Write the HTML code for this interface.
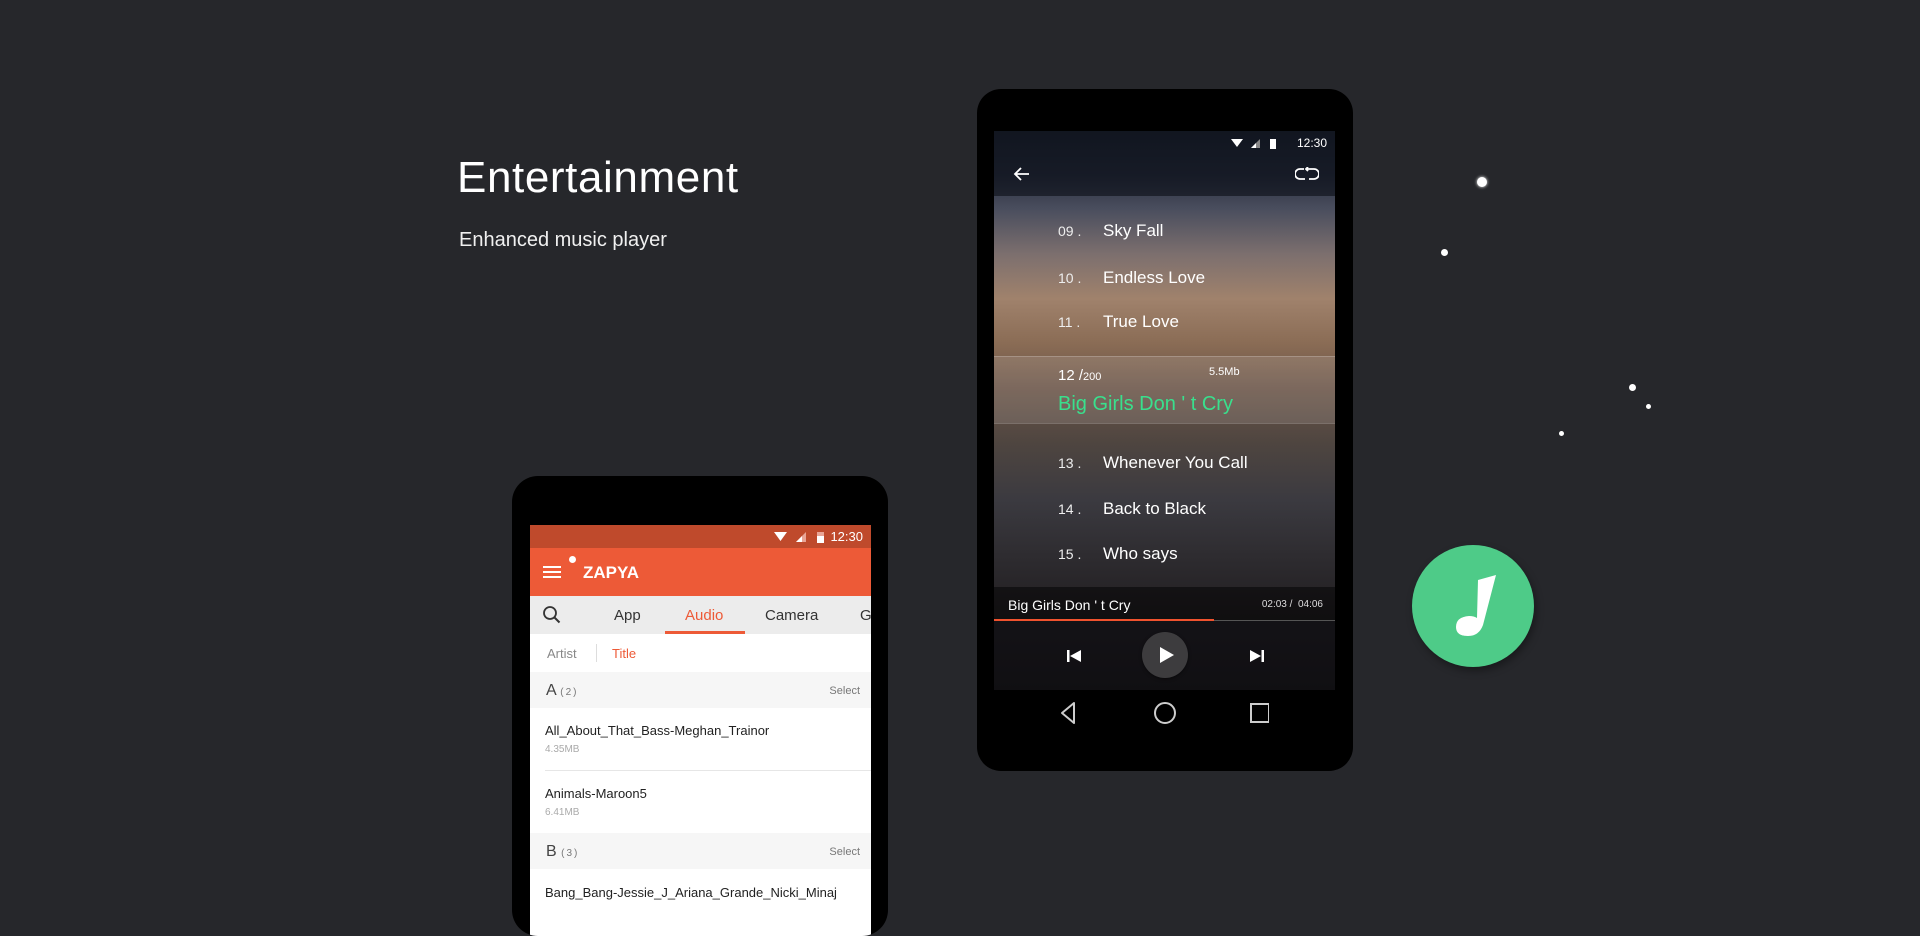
<!DOCTYPE html>
<html><head><meta charset="utf-8"><style>
*{margin:0;padding:0;box-sizing:border-box}
body{width:1920px;height:900px;background:#26272b;overflow:hidden;position:relative;font-family:"Liberation Sans",sans-serif}
.abs{position:absolute}
.t{position:absolute;white-space:nowrap}
</style></head><body>
<div class="t" style="left:457px;top:153px;font-size:44px;color:#fff;letter-spacing:0.6px">Entertainment</div>
<div class="t" style="left:459px;top:229px;font-size:20px;color:#f0f0f0">Enhanced music player</div>

<!-- stars -->
<div class="abs" style="left:1477px;top:177px;width:10px;height:10px;border-radius:50%;background:#fff;box-shadow:0 0 3px #fff"></div>
<div class="abs" style="left:1441px;top:249px;width:7px;height:7px;border-radius:50%;background:#fff"></div>
<div class="abs" style="left:1629px;top:384px;width:7px;height:7px;border-radius:50%;background:#fff"></div>
<div class="abs" style="left:1646px;top:404px;width:5px;height:5px;border-radius:50%;background:#fff"></div>
<div class="abs" style="left:1559px;top:431px;width:5px;height:5px;border-radius:50%;background:#fff"></div>

<!-- green circle -->
<div class="abs" style="left:1412px;top:545px;width:122px;height:122px;border-radius:50%;background:#4ecb88;box-shadow:2px 4px 8px rgba(0,0,0,.35)">
<svg width="122" height="122" viewBox="0 0 122 122"><path d="M66 35 L84 30 L71 80 Q67 91 56 91 Q44 91 44 82 Q44 72 57 71 Q62 71 65 73 Z" fill="#fff"/></svg>
</div>

<!-- left phone -->
<div class="abs" style="left:512px;top:476px;width:376px;height:460px;border-radius:26px;background:#000;overflow:hidden">
 <div class="abs" style="left:18px;top:49px;width:341px;height:420px;background:#fff;overflow:hidden">
  <div class="abs" style="left:0;top:0;width:341px;height:23px;background:#bf4a2c"></div>
  <div class="t" style="right:8px;top:4px;font-size:13px;color:#fff">12:30</div>
  <svg class="abs" style="left:244px;top:6px" width="60" height="13"><path d="M0 1 L13 1 L6.5 10Z" fill="#fff"/><path d="M22 11 L32 1 L32 11Z" fill="#e9a596"/><path d="M22 11 L28 5 L28 11Z" fill="#fff"/><rect x="43" y="1" width="7" height="11" fill="#fff"/><rect x="43" y="1" width="7" height="4" fill="#e9a596"/></svg>
  <div class="abs" style="left:0;top:23px;width:341px;height:48px;background:#ed5a37"></div>
  <div class="abs" style="left:13px;top:41px;width:18px;height:2px;background:#fff;box-shadow:0 5px 0 #fff,0 10px 0 #fff"></div>
  <div class="abs" style="left:39px;top:31px;width:7px;height:7px;border-radius:50%;background:#fff"></div>
  <div class="t" style="left:53px;top:38px;font-size:17px;font-weight:bold;color:#fff">ZAPYA</div>
  <div class="abs" style="left:0;top:71px;width:341px;height:38px;background:#ececec"></div>
  <svg class="abs" style="left:13px;top:81px" width="18" height="18"><circle cx="7" cy="7" r="6" stroke="#333" stroke-width="1.8" fill="none"/><path d="M11.5 11.5 L16.5 16.5" stroke="#333" stroke-width="2"/></svg>
  <div class="t" style="left:84px;top:82px;font-size:15px;color:#333">App</div>
  <div class="t" style="left:155px;top:82px;font-size:15px;color:#ed5a37">Audio</div>
  <div class="abs" style="left:135px;top:106px;width:80px;height:3px;background:#ed5a37"></div>
  <div class="t" style="left:235px;top:82px;font-size:15px;color:#333">Camera</div>
  <div class="t" style="left:330px;top:82px;font-size:15px;color:#333">G</div>
  <div class="t" style="left:17px;top:121px;font-size:13px;color:#888">Artist</div>
  <div class="abs" style="left:66px;top:119px;width:1px;height:18px;background:#ddd"></div>
  <div class="t" style="left:82px;top:121px;font-size:13px;color:#ed5a37">Title</div>
  <div class="abs" style="left:0;top:147px;width:341px;height:36px;background:#f6f6f6"></div>
  <div class="t" style="left:16px;top:157px;font-size:16px;color:#444">A <span style="font-size:10px;color:#777;letter-spacing:2px">(2)</span></div>
  <div class="t" style="right:11px;top:160px;font-size:11px;color:#777">Select</div>
  <div class="t" style="left:15px;top:198px;font-size:13px;color:#222">All_About_That_Bass-Meghan_Trainor</div>
  <div class="t" style="left:15px;top:219px;font-size:10px;color:#aaa">4.35MB</div>
  <div class="abs" style="left:15px;top:245px;width:326px;height:1px;background:#e6e6e6"></div>
  <div class="t" style="left:15px;top:261px;font-size:13px;color:#222">Animals-Maroon5</div>
  <div class="t" style="left:15px;top:282px;font-size:10px;color:#aaa">6.41MB</div>
  <div class="abs" style="left:0;top:308px;width:341px;height:36px;background:#f6f6f6"></div>
  <div class="t" style="left:16px;top:318px;font-size:16px;color:#444">B <span style="font-size:10px;color:#777;letter-spacing:2px">(3)</span></div>
  <div class="t" style="right:11px;top:321px;font-size:11px;color:#777">Select</div>
  <div class="t" style="left:15px;top:360px;font-size:13px;color:#222">Bang_Bang-Jessie_J_Ariana_Grande_Nicki_Minaj</div>
 </div>
</div>

<!-- music phone -->
<div class="abs" style="left:977px;top:89px;width:376px;height:682px;border-radius:24px;background:#000;overflow:hidden">
 <div class="abs" style="left:17px;top:42px;width:341px;height:559px;overflow:hidden;background:
  linear-gradient(180deg,#1d2330 0%,#2a3040 8%,#4a4e5e 14%,#7c6f6e 22%,#a0826c 30%,#8a6c55 38%,#6a5447 46%,#4e4540 56%,#3b3a40 66%,#2e2c30 76%,#221f22 86%,#1a1818 100%)">
  <div class="abs" style="left:0;top:0;width:341px;height:65px;background:rgba(10,14,22,.6)"></div>
  <div class="t" style="right:8px;top:5px;font-size:12px;color:#fff">12:30</div>
  <svg class="abs" style="left:237px;top:7px" width="60" height="12"><path d="M0 1 L12 1 L6 9Z" fill="#fff"/><path d="M20 10 L29 1 L29 10Z" fill="#888"/><path d="M20 10 L25 5 L25 10Z" fill="#fff"/><rect x="39" y="1" width="6" height="10" fill="#fff"/></svg>
  <svg class="abs" style="left:19px;top:35px" width="18" height="16"><path d="M16 8 H3 M8 2 L2 8 L8 14" stroke="#fff" stroke-width="1.8" fill="none"/></svg>
  <svg class="abs" style="left:301px;top:36px" width="24" height="14"><path d="M9 2 H5 A5 5 0 0 0 5 12 H10 M14 12 H19 A5 5 0 0 0 19 2 H12 M13 0 L11 2 L13 4" stroke="#fff" stroke-width="1.8" fill="none"/></svg>
  <div class="t" style="left:64px;top:92px;font-size:14px;color:#eee">09 .</div><div class="t" style="left:109px;top:90px;font-size:17px;color:#fff">Sky Fall</div>
  <div class="t" style="left:64px;top:139px;font-size:14px;color:#eee">10 .</div><div class="t" style="left:109px;top:137px;font-size:17px;color:#fff">Endless Love</div>
  <div class="t" style="left:64px;top:183px;font-size:14px;color:#eee">11 .</div><div class="t" style="left:109px;top:181px;font-size:17px;color:#fff">True Love</div>
  <div class="abs" style="left:0;top:225px;width:341px;height:68px;background:rgba(255,255,255,.12);border-top:1px solid rgba(255,255,255,.2);border-bottom:1px solid rgba(255,255,255,.1)"></div>
  <div class="t" style="left:64px;top:236px;font-size:15px;color:#fff">12 /<span style="font-size:11px">200</span></div>
  <div class="t" style="left:215px;top:235px;font-size:11px;color:#fff">5.5Mb</div>
  <div class="t" style="left:64px;top:262px;font-size:20px;color:#39e08d">Big Girls Don ' t Cry</div>
  <div class="t" style="left:64px;top:324px;font-size:14px;color:#eee">13 .</div><div class="t" style="left:109px;top:322px;font-size:17px;color:#fff">Whenever You Call</div>
  <div class="t" style="left:64px;top:370px;font-size:14px;color:#eee">14 .</div><div class="t" style="left:109px;top:368px;font-size:17px;color:#fff">Back to Black</div>
  <div class="t" style="left:64px;top:415px;font-size:14px;color:#eee">15 .</div><div class="t" style="left:109px;top:413px;font-size:17px;color:#fff">Who says</div>
  <div class="abs" style="left:0;top:456px;width:341px;height:34px;background:rgba(0,0,0,.5)"></div>
  <div class="t" style="left:14px;top:466px;font-size:14px;color:#fff">Big Girls Don ' t Cry</div>
  <div class="t" style="right:12px;top:468px;font-size:10px;color:#ddd">02:03 / &nbsp;04:06</div>
  <div class="abs" style="left:0;top:489px;width:341px;height:1px;background:#555"></div>
  <div class="abs" style="left:0;top:488px;width:220px;height:2px;background:#f0522e"></div>
  <div class="abs" style="left:0;top:490px;width:341px;height:69px;background:rgba(10,10,14,.55)"></div>
  <svg class="abs" style="left:72px;top:517px" width="16" height="16"><rect x="1" y="2" width="2.5" height="12" fill="#fff"/><path d="M15 2 V14 L4 8Z" fill="#fff"/></svg>
  <div class="abs" style="left:148px;top:501px;width:46px;height:46px;border-radius:50%;background:#3d3c3e;box-shadow:0 1px 3px rgba(0,0,0,.5)"></div>
  <svg class="abs" style="left:164px;top:514px" width="18" height="20"><path d="M2 2 L16 10 L2 18Z" fill="#fff"/></svg>
  <svg class="abs" style="left:255px;top:517px" width="16" height="16"><rect x="12.5" y="2" width="2.5" height="12" fill="#fff"/><path d="M1 2 V14 L12 8Z" fill="#fff"/></svg>
 </div>
 <svg class="abs" style="left:82px;top:610px" width="210" height="30"><path d="M15 4 L3 14 L15 24Z" stroke="#ccc" stroke-width="2" fill="none" stroke-linejoin="round"/><circle cx="106" cy="14" r="10" stroke="#ccc" stroke-width="2" fill="none"/><rect x="192" y="5" width="18" height="18" stroke="#ccc" stroke-width="2" fill="none"/></svg>
</div>
</body></html>
